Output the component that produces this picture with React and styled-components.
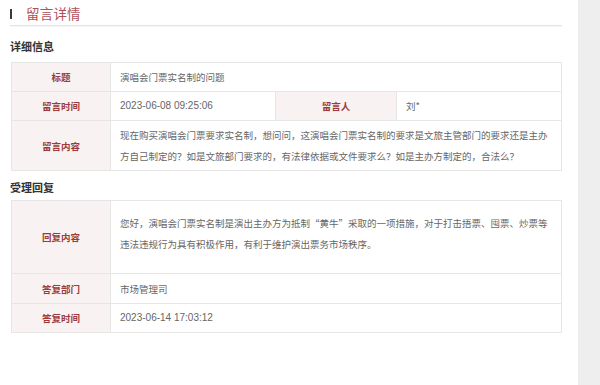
import React from "react";
import styled, { createGlobalStyle } from "styled-components";

const Global = createGlobalStyle`
  html, body { margin: 0; padding: 0; background: #fff; }
  body { font-family: "Noto Sans CJK SC", "Liberation Sans", sans-serif; color: #333; }
`;

const Page = styled.div`
  display: flex;
  width: 600px;
  min-height: 385px;
`;

const Main = styled.main`
  flex: 1;
  padding: 0 16px 0 10px;
`;

const Side = styled.aside`
  width: 22px;
  background: #eeeeee;
`;

const Header = styled.header`
  display: flex;
  align-items: center;
  height: 25px;
  border-bottom: 1px solid #e4e4e4;
  box-shadow: 0 1px 1px rgba(0,0,0,0.03);
`;

const Bar = styled.span`
  width: 2px;
  height: 10px;
  background: #3a3a3a;
  margin: 2px 14px 0 0;
`;

const Title = styled.h1`
  margin: 0;
  font-size: 13.5px;
  font-weight: 400;
  color: #b0505a;
  line-height: 20px;
  letter-spacing: 0.2px;
`;

const SectionTitle = styled.h2`
  margin: ${(p) => p.$top}px 0 ${(p) => p.$bottom}px;
  font-size: 11px;
  line-height: 12px;
  font-weight: 700;
  color: #333;
`;

const Table = styled.table`
  margin-left: 1px;
  width: 550px;
  border-collapse: collapse;
  table-layout: fixed;
  border: 1px solid #e2e2e2;
`;

const Row = styled.tr`
  height: ${(p) => p.$h}px;
`;

const Label = styled.th`
  background: #f8f3f2;
  color: #9c3b3d;
  font-size: 9.5px;
  font-weight: 700;
  text-align: center;
  border: 1px solid #e6e6e6;
  padding: 0;
`;

const Value = styled.td`
  color: #666;
  font-size: ${(p) => (p.$num ? "10px" : "9.5px")};
  font-family: ${(p) =>
    p.$num ? '"Liberation Sans", "Noto Sans CJK SC", sans-serif' : 'inherit'};
  border: 1px solid #e6e6e6;
  padding: ${(p) => p.$pad || "0 8px 0 9px"};
  line-height: ${(p) => p.$lh || 14}px;
  vertical-align: ${(p) => p.$va || "middle"};
`;

export default function App() {
  return (
    <>
      <Global />
      <Page>
        <Main>
          <Header>
            <Bar />
            <Title>留言详情</Title>
          </Header>

          <SectionTitle $top={14} $bottom={10}>详细信息</SectionTitle>
          <Table>
            <colgroup>
              <col style={{ width: 99 }} />
              <col style={{ width: 165 }} />
              <col style={{ width: 121 }} />
              <col style={{ width: 165 }} />
            </colgroup>
            <tbody>
              <Row $h={29}>
                <Label>标题</Label>
                <Value colSpan={3}>演唱会门票实名制的问题</Value>
              </Row>
              <Row $h={29}>
                <Label>留言时间</Label>
                <Value $num>2023-06-08 09:25:06</Value>
                <Label>留言人</Label>
                <Value>刘*</Value>
              </Row>
              <Row $h={50}>
                <Label>留言内容</Label>
                <Value colSpan={3} $lh={21}>
                  现在购买演唱会门票要求实名制，想问问，这演唱会门票实名制的要求是文旅主管部门的要求还是主办
                  <br />
                  方自己制定的？如是文旅部门要求的，有法律依据或文件要求么？如是主办方制定的，合法么？
                </Value>
              </Row>
            </tbody>
          </Table>

          <SectionTitle $top={10} $bottom={7}>受理回复</SectionTitle>
          <Table>
            <colgroup>
              <col style={{ width: 99 }} />
              <col style={{ width: 451 }} />
            </colgroup>
            <tbody>
              <Row $h={73}>
                <Label>回复内容</Label>
                <Value $lh={21} $va="top" $pad="12px 8px 0 9px">
                  您好，演唱会门票实名制是演出主办方为抵制“黄牛”采取的一项措施，对于打击捂票、囤票、炒票等
                  <br />
                  违法违规行为具有积极作用，有利于维护演出票务市场秩序。
                </Value>
              </Row>
              <Row $h={30}>
                <Label>答复部门</Label>
                <Value>市场管理司</Value>
              </Row>
              <Row $h={29}>
                <Label>答复时间</Label>
                <Value $num>2023-06-14 17:03:12</Value>
              </Row>
            </tbody>
          </Table>
        </Main>
        <Side />
      </Page>
    </>
  );
}
